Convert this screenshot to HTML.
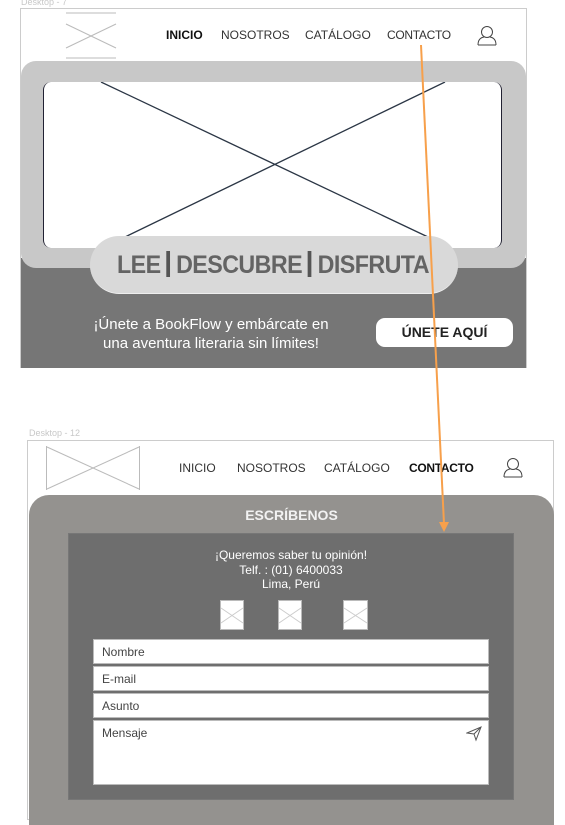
<!DOCTYPE html>
<html><head><meta charset="utf-8"><style>
*{margin:0;padding:0;box-sizing:border-box}
body{width:565px;height:812px;background:#fff;position:relative;overflow:hidden;font-family:"Liberation Sans",sans-serif}
.a{position:absolute}
.lbl{font-size:9px;color:#c8c8c8}
.nav{font-size:12px;color:#333;white-space:nowrap}
.inp{position:absolute;left:93px;width:396px;background:#fff;border:1px solid #bbb;font-size:12px;color:#444;padding:5px 8px}
</style></head><body>
<div class="a lbl" style="left:21px;top:-3px">Desktop - 7</div>
<div class="a" style="left:20px;top:8px;width:507px;height:360px;border:1px solid #ccc;background:#fff"></div>
<svg class="a" style="left:65px;top:12px" width="52" height="48"><line x1="1" y1="1" x2="51" y2="1" stroke="#bbb"/><line x1="1" y1="46" x2="51" y2="46" stroke="#bbb"/><line x1="1" y1="12" x2="51" y2="36" stroke="#bbb"/><line x1="1" y1="36" x2="51" y2="12" stroke="#bbb"/></svg>
<div class="a nav" style="left:166px;top:28px;font-weight:bold;color:#111">INICIO</div>
<div class="a nav" style="left:221px;top:28px">NOSOTROS</div>
<div class="a nav" style="left:305px;top:28px">CATÁLOGO</div>
<div class="a nav" style="left:387px;top:28px;letter-spacing:-0.3px">CONTACTO</div>
<svg class="a" style="left:477px;top:25px" width="20" height="21"><circle cx="10" cy="7" r="5.5" fill="none" stroke="#444"/><path d="M1 20 Q1 13 7 12 M19 20 Q19 13 13 12 M1 20 H19" fill="none" stroke="#444"/></svg>
<div class="a" style="left:21px;top:258px;width:505px;height:110px;background:#767676"></div>
<div class="a" style="left:21px;top:61px;width:505px;height:207px;background:#c8c8c8;border-radius:15px"></div>
<div class="a" style="left:43px;top:82px;width:459px;height:166px;background:#fff;border-radius:8px;border-left:1px solid #223;border-right:1px solid #223"></div>
<svg class="a" style="left:43px;top:82px" width="459" height="166"><line x1="58" y1="0" x2="385" y2="155" stroke="#2b3645" stroke-width="1.3"/><line x1="402" y1="0" x2="82" y2="155" stroke="#2b3645" stroke-width="1.3"/></svg>
<div class="a" style="left:90px;top:236px;width:368px;height:58px;background:#d9d9d9;border-radius:29px;border-bottom:1px solid #eee"></div>
<div class="a" style="left:117px;top:251px;font-size:25px;font-weight:bold;color:#646464;letter-spacing:-0.6px;white-space:nowrap;transform:scaleX(0.93);transform-origin:left">LEE <span style="display:inline-block;width:4px;height:26px;background:#555;vertical-align:-4px"></span> DESCUBRE <span style="display:inline-block;width:4px;height:26px;background:#555;vertical-align:-4px"></span> DISFRUTA</div>
<div class="a" style="left:70px;top:315px;width:282px;text-align:center;font-size:15px;line-height:19px;color:#fff;white-space:nowrap">¡Únete a BookFlow y embárcate en<br>una aventura literaria sin límites!</div>
<div class="a" style="left:376px;top:318px;width:137px;height:29px;background:#fff;border-radius:9px;text-align:center;font-weight:bold;font-size:14px;line-height:29px;color:#222">ÚNETE AQUÍ</div>

<div class="a lbl" style="left:29px;top:428px">Desktop - 12</div>
<div class="a" style="left:27px;top:440px;width:527px;height:380px;border:1px solid #ccc;background:#fff"></div>
<svg class="a" style="left:46px;top:446px" width="95" height="45"><line x1="0.5" y1="0" x2="0.5" y2="44" stroke="#bbb"/><line x1="93.5" y1="0" x2="93.5" y2="44" stroke="#bbb"/><line x1="1" y1="1" x2="93" y2="43" stroke="#bbb"/><line x1="1" y1="43" x2="93" y2="1" stroke="#bbb"/></svg>
<div class="a nav" style="left:179px;top:461px">INICIO</div>
<div class="a nav" style="left:237px;top:461px">NOSOTROS</div>
<div class="a nav" style="left:324px;top:461px">CATÁLOGO</div>
<div class="a nav" style="left:409px;top:461px;font-weight:bold;color:#111;letter-spacing:-0.3px">CONTACTO</div>
<svg class="a" style="left:503px;top:457px" width="20" height="21"><circle cx="10" cy="7" r="5.5" fill="none" stroke="#444"/><path d="M1 20 Q1 13 7 12 M19 20 Q19 13 13 12 M1 20 H19" fill="none" stroke="#444"/></svg>
<div class="a" style="left:29px;top:495px;width:525px;height:330px;background:#94928f;border-radius:20px 20px 0 0"></div>
<div class="a" style="left:29px;top:507px;width:525px;text-align:center;font-weight:bold;font-size:14px;color:#f2f2f2">ESCRÍBENOS</div>
<div class="a" style="left:68px;top:533px;width:446px;height:267px;background:#6e6e6e;border:1px solid #777"></div>
<div class="a" style="left:68px;top:548px;width:446px;text-align:center;font-size:12px;line-height:14.5px;color:#fff">¡Queremos saber tu opinión!<br>Telf. : (01) 6400033<br>Lima, Perú</div>
<svg class="a" style="left:218px;top:599px" width="160" height="33"><g fill="#fff" stroke="#bbb"><rect x="2.5" y="1.5" width="23" height="29"/><rect x="60.5" y="1.5" width="23" height="29"/><rect x="125.5" y="1.5" width="24" height="29"/></g><g stroke="#ccc"><path d="M3 9 L25 24 M3 24 L25 9 M61 9 L83 24 M61 24 L83 9 M126 9 L149 24 M126 24 L149 9"/></g></svg>
<div class="inp" style="top:639px;height:25px">Nombre</div>
<div class="inp" style="top:666px;height:25px">E-mail</div>
<div class="inp" style="top:693px;height:25px">Asunto</div>
<div class="inp" style="top:720px;height:65px">Mensaje</div>
<svg class="a" style="left:466px;top:725px" width="17" height="17"><path d="M1 8 L15 2 L10 15 L8 9 Z M8 9 L15 2" fill="none" stroke="#555"/></svg>
<svg class="a" style="left:0;top:0" width="565" height="812"><line x1="421" y1="45" x2="444" y2="524" stroke="#f7a04b" stroke-width="2"/><path d="M439 522 L444 532 L449 522 Z" fill="#f7a04b"/></svg>
</body></html>
